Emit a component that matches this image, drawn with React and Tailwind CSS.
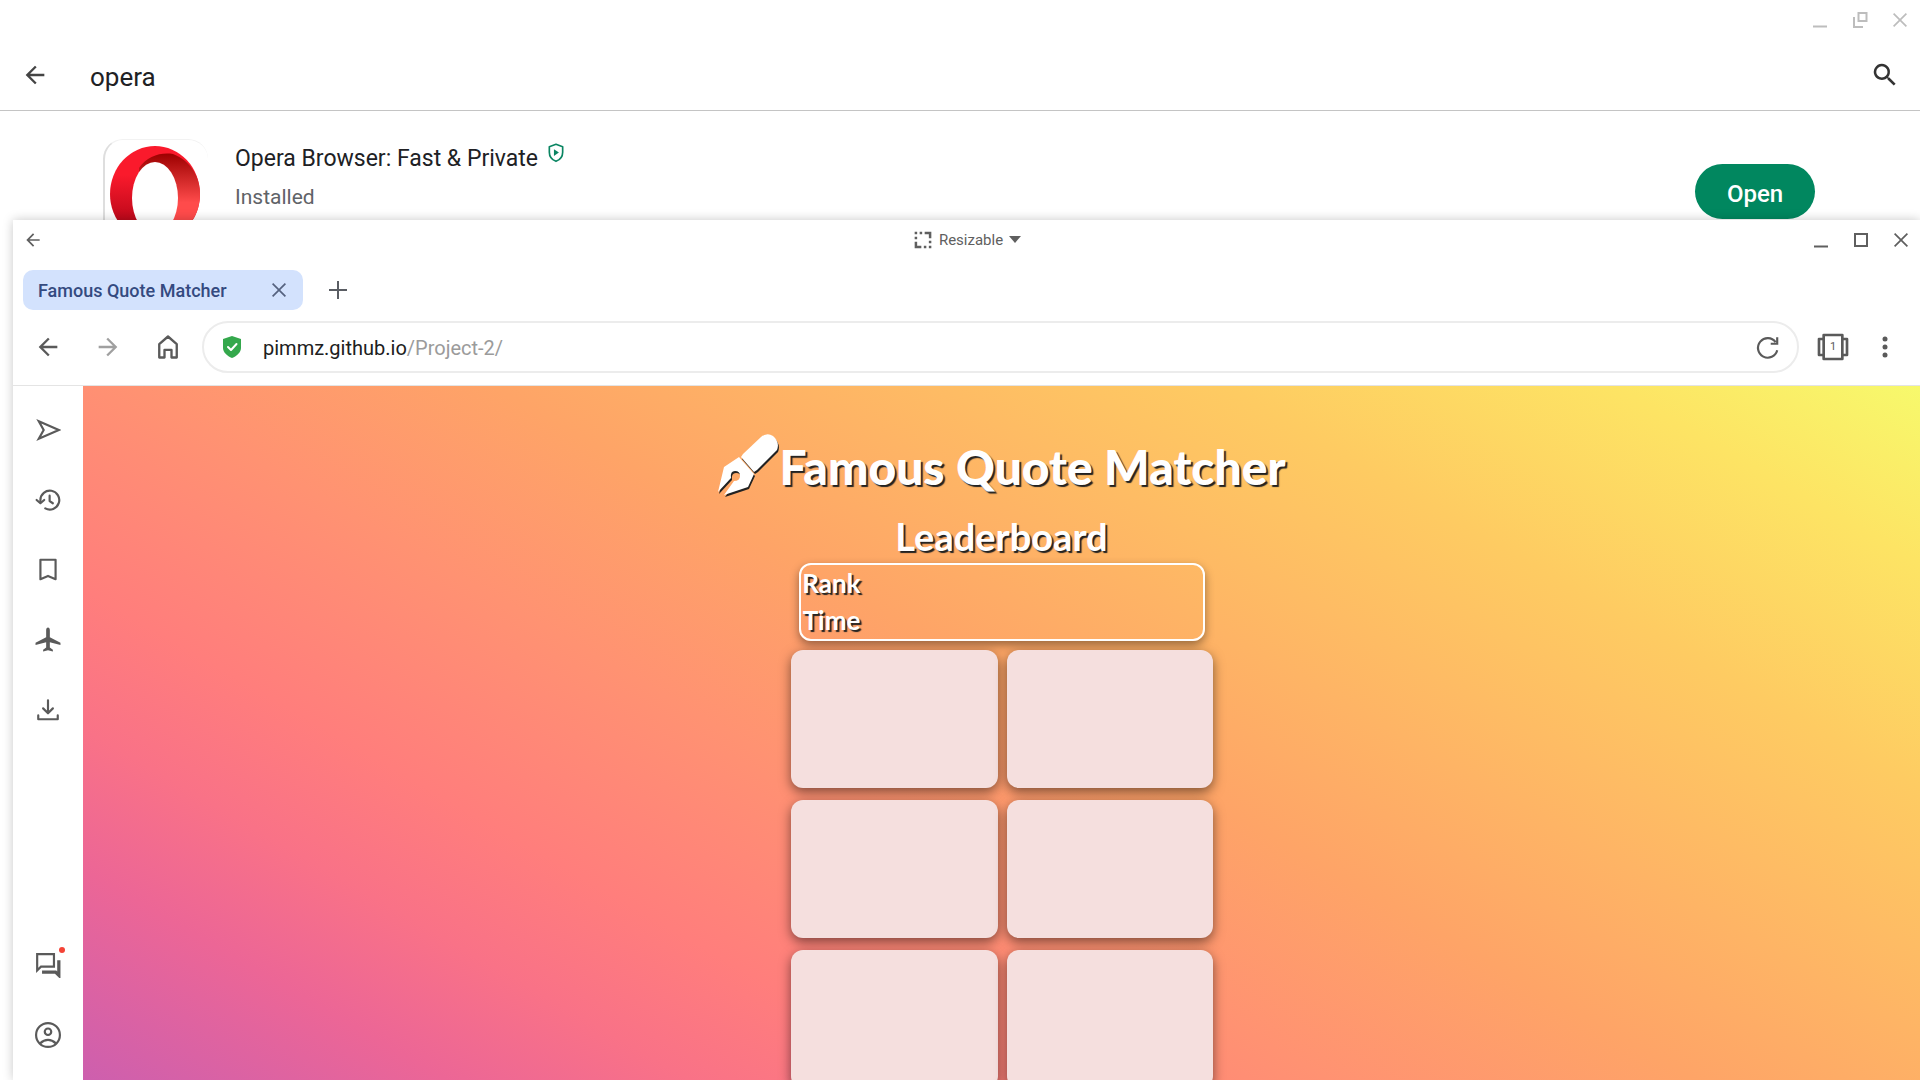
const I = ({ size = 24, className = "", fill = "none", children, box = "0 0 24 24" }) => (
  <svg width={size} height={size} viewBox={box} fill={fill} stroke={fill === "none" ? "currentColor" : "none"} strokeWidth="2" strokeLinecap="round" strokeLinejoin="round" className={className} aria-hidden="true">
    {children}
  </svg>
);

const ArrowLeft = ({ size = 28, className }) => (
  <I size={size} fill="currentColor" className={className}>
    <path d="M20 11H7.83l5.59-5.59L12 4l-8 8 8 8 1.41-1.41L7.83 13H20z" />
  </I>
);

const Cross = ({ size = 24 }) => (
  <I size={size} fill="currentColor">
    <path d="M19 6.2 17.8 5 12 10.8 6.2 5 5 6.2 10.8 12 5 17.8 6.2 19 12 13.2 17.8 19 19 17.8 13.2 12z" />
  </I>
);

const OperaLogo = () => (
  <svg width="92" height="92" viewBox="0 0 92 92" aria-hidden="true">
    <defs>
      <linearGradient id="ringLeft" x1="0" y1="0" x2="0" y2="1">
        <stop offset="0.3" stopColor="#fa1a2c" />
        <stop offset="1" stopColor="#a00012" />
      </linearGradient>
      <linearGradient id="ringRight" x1="0" y1="0" x2="0" y2="1">
        <stop offset="0" stopColor="#9c0000" />
        <stop offset="0.6" stopColor="#ff4b4b" />
      </linearGradient>
    </defs>
    <ellipse cx="46" cy="48" rx="45" ry="48" fill="url(#ringLeft)" />
    <path d="M30 22C38 10 52 6 64 8C82 15 91 31 91 48S84 78 72 84C58 94 42 88 30 76Z" fill="url(#ringRight)" />
    <ellipse cx="46" cy="52" rx="23" ry="36" fill="#fff" />
  </svg>
);

const sidebarTop = [
  ["Flow", <path d="M3.5 4 22 12 3.5 20 8 12z" strokeLinejoin="miter" />],
  ["History", <><path d="M5 14V12a8.700 8.700 0 1 1 4.500 7.700" /><path d="M1.500 12 5 15l3.500-3M13.500 8v5l3 2" /></>],
  ["Bookmarks", <path d="M5 2.500h14v18L12 17.500 5 20.500z" />],
  ["Offline pages", <path fill="currentColor" stroke="none" d="M23.500 16.500v-2l-9.800-5V3C13.700 1.500 13 .5 12 .5s-1.700 1-1.700 2.500v6.500l-9.800 5v2l9.800-2.500v5l-2.800 2v1.500l4.500-1 4.500 1V21l-2.800-2v-5z" />],
  ["Downloads", <path d="M12 3v11M7.500 10.500 12 15l4.500-4.500M3 17V20.500h18V17" />],
];

const sideButton = "flex size-[70px] items-center justify-center";

export default function App() {
  return (
    <div className="relative flex h-screen flex-col overflow-hidden bg-white font-['Roboto',sans-serif] text-[#202124]">
      <header className="shrink-0 border-b border-[#c4c4c4]">
        <div className="flex h-10 items-center justify-end gap-4 pr-2 text-[#bdbdbd]">
          <button aria-label="Minimize Play Store"><I><path d="M5 18.500h14" strokeLinecap="butt" /></I></button>
          <button aria-label="Restore Play Store"><I><path d="M10.500 5h8v8h-8zM6 9v10h9" strokeLinecap="butt" strokeLinejoin="miter" /></I></button>
          <button aria-label="Close Play Store"><Cross /></button>
        </div>
        <div className="flex h-[70px] items-center pl-[21px] pr-5">
          <button aria-label="Back" className="text-[#444]"><ArrowLeft /></button>
          <input aria-label="Search apps" defaultValue="opera" className="ml-[41px] mt-1 min-w-0 flex-1 text-[26px] outline-none" />
          <button aria-label="Search" className="text-[#333]">
            <I size={30} fill="currentColor"><path d="M15.500 14h-.79l-.28-.27a6.500 6.500 0 1 0-.7.7l.27.28v.79l5 4.990L20.490 19zM9.500 14a4.500 4.500 0 1 1 0-9 4.500 4.500 0 0 1 0 9z" /></I>
          </button>
        </div>
      </header>

      <section className="flex shrink-0 items-start pl-[103px] pr-[105px] pt-7">
        <div className="flex size-[105px] items-center rounded-[20px] border-l-2 border-t border-l-[#dedede] border-t-[#f2f2f2] pl-1">
          <OperaLogo />
        </div>
        <div className="ml-[27px] flex-1 pt-1">
          <h2 className="flex items-start gap-2 text-[23px] leading-8">
            Opera Browser: Fast &amp; Private
            <I size={20} className="text-[#0a8562]"><path d="M12 1.500 20 4.500v6.500c0 5-3 9-8 11-5-2-8-6-8-11V4.500z" /><path d="M9.500 7.500v8l6-4z" fill="currentColor" stroke="none" /></I>
          </h2>
          <p className="mt-2 text-[21px] leading-7 text-[#5f6368]">Installed</p>
        </div>
        <button className="mt-[25px] h-[55px] w-[120px] rounded-full bg-[#01875f] pt-1 text-[24px] font-medium text-white">Open</button>
      </section>

      <main className="absolute inset-x-0 bottom-0 top-[220px] ml-[13px] flex flex-col bg-white shadow-[0_0_10px_rgba(0,0,0,0.22)]">
        <div className="grid h-10 shrink-0 grid-cols-[1fr_auto_1fr] items-center pl-2 pr-[7px] text-[#5f5f5f]">
          <button aria-label="Window back" className="justify-self-start pl-0.5"><ArrowLeft size={20} /></button>
          <button className="flex items-center gap-1.5 text-[15px]">
            <I size={20} fill="currentColor"><path d="M2 2h3v3H2zM8 2h3v3H8zM14 2h8v8h-3V5h-5zM2 8h3v3H2zM2 14h3v5h5v3H2zM13 19h3v3h-3zM19 19h3v3h-3zM19 13h3v3h-3z" /></I>
            Resizable
            <I size={12} fill="currentColor" box="0 0 12 12"><path d="M0 2h12L6 9z" /></I>
          </button>
          <div className="flex justify-end gap-4">
            <button aria-label="Minimize"><I><path d="M5 18.500h14" strokeLinecap="butt" /></I></button>
            <button aria-label="Maximize"><I><path d="M6 6h12v12H6z" strokeLinejoin="miter" /></I></button>
            <button aria-label="Close"><Cross /></button>
          </div>
        </div>

        <div className="flex h-[60px] shrink-0 items-center gap-[23px] pl-2.5 text-[#5a5d63]">
          <div className="flex h-10 w-[280px] items-center justify-between rounded-[10px] bg-[#d3e2fd] pl-[15px] pr-3 text-[18px] font-medium text-[#344a80]">
            Famous Quote Matcher
            <button aria-label="Close tab" className="text-[#55627f]"><Cross /></button>
          </div>
          <button aria-label="New tab"><I size={24}><path d="M12 3v18M3 12h18" strokeLinecap="butt" /></I></button>
        </div>

        <nav className="flex h-[66px] shrink-0 items-start border-b border-[#e4e4e4] pr-[23px] pt-px text-[#5a5a5a]">
          <div className="flex h-[52px] items-center gap-8 pl-[21px] pr-5">
            <button aria-label="Page back"><ArrowLeft /></button>
            <button aria-label="Page forward" className="text-[#a0a0a0]"><ArrowLeft className="rotate-180" /></button>
            <button aria-label="Home"><I size={28}><path d="M4.500 9.500 12 3l7.500 6.500v11.500h-4.500v-6.500H9V21H4.500z" strokeLinejoin="round" /></I></button>
          </div>
          <div className="flex h-[52px] flex-1 items-center rounded-full border-2 border-[#ececec] px-4">
            <I size={24} fill="#34a84c"><path d="M12 1 21 4v9c0 4-4 8-9 10-5-2-9-6-9-10V4z" /><path d="m8 12 3 3 5.500-6" fill="none" stroke="#fff" /></I>
            <a href="#page" className="ml-[19px] flex-1 pt-0.5 text-[20px] text-[#202020]">pimmz.github.io<span className="text-[#9b9b9b]">/Project-2/</span></a>
            <button aria-label="Reload"><I size={26}><path d="M19 7.500A9 9 0 1 0 20.500 15M20.500 3v6H14.500" strokeLinecap="butt" strokeLinejoin="miter" /></I></button>
          </div>
          <div className="flex h-[52px] items-center gap-6 pl-[18px]">
            <button aria-label="Tabs" className="relative flex items-center justify-center">
              <I size={32}><path d="M5 3h14v18H5zM5 6H1.500v12H5M19 6h3.500v12H19" /></I>
              <span className="absolute text-[11px]">1</span>
            </button>
            <button aria-label="Menu"><I size={24} fill="currentColor"><circle cx="12" cy="4" r="2.500" /><circle cx="12" cy="12" r="2.500" /><circle cx="12" cy="20" r="2.500" /></I></button>
          </div>
        </nav>

        <div className="flex min-h-0 flex-1">
          <aside className="flex w-[70px] shrink-0 flex-col pb-2.5 pr-px pt-[9px] text-[#5a5a5a]">
            {sidebarTop.map(([name, icon]) => (
              <button key={name} aria-label={name} className={sideButton}><I size={26}>{icon}</I></button>
            ))}
            <button aria-label="Messages" className="relative mt-auto flex size-[70px] items-center justify-center">
              <I size={26}><path d="M2 2h15.500v11.500H5.500L2 17z" strokeLinejoin="miter" /><path d="M6.500 18.500H19l3 3V7.500" strokeWidth="3" strokeLinecap="butt" strokeLinejoin="miter" /></I>
              <span className="absolute right-[18px] top-[17px] size-1.5 rounded-full bg-[#f44336]" />
            </button>
            <button aria-label="Profile" className={sideButton}><I size={26}><circle cx="12" cy="12" r="11" /><circle cx="12" cy="9" r="3" /><path d="M5 19.500c4-4 10-4 14 0" /></I></button>
          </aside>

          <div id="page" className="flex min-w-0 flex-1 flex-col items-center overflow-hidden bg-[linear-gradient(30deg,#cd5fae_0%,#ec6696_12%,#f97287_20%,#ff7e7c_28%,#ff9272_41%,#fea467_53%,#feb465_63%,#fecb62_77%,#fde464_90%,#f7f96c_100%)] pt-[39px] font-['Lato',sans-serif] text-white [text-shadow:2px_2px_1px_#222]">
            <h1 className="flex items-center text-[48px] leading-[84px] font-black">
              <I size={62} fill="#fff" box="0 0 62 62" className="mb-1 [filter:drop-shadow(1px_2px_0px_#222)]"><path d="M26 20 44 3q6-5 12-1 7 6 4 14L40 36 37 38 24 23z" /><path d="M22 23 37 40 31 53 7 61 17 47q6 0 6-5t-5-5-4 7L1 58 7 33z" /></I>
              Famous Quote Matcher
            </h1>
            <h2 className="text-[38px] leading-[54px] font-bold">Leaderboard</h2>
            <table className="block h-20 w-[406px] rounded-xl border-2 border-white text-[26px] leading-[37px] shadow-[0_4px_10px_rgba(0,0,0,0.4)]">
              <tbody className="block"><tr className="flex w-[62px] flex-col text-center"><th>Rank</th><th>Time</th></tr></tbody>
            </table>
            <div className="mt-[9px] grid shrink-0 grid-cols-[207px_206px] gap-x-[9px] gap-y-3">
              {["a", "b", "c", "d", "e", "f"].map((card) => (
                <button key={card} aria-label="Quote card" className="h-[138px] rounded-xl bg-[#f5dfde] shadow-[0_4px_12px_rgba(0,0,0,0.5)]" />
              ))}
            </div>
          </div>
        </div>
      </main>
    </div>
  );
}
